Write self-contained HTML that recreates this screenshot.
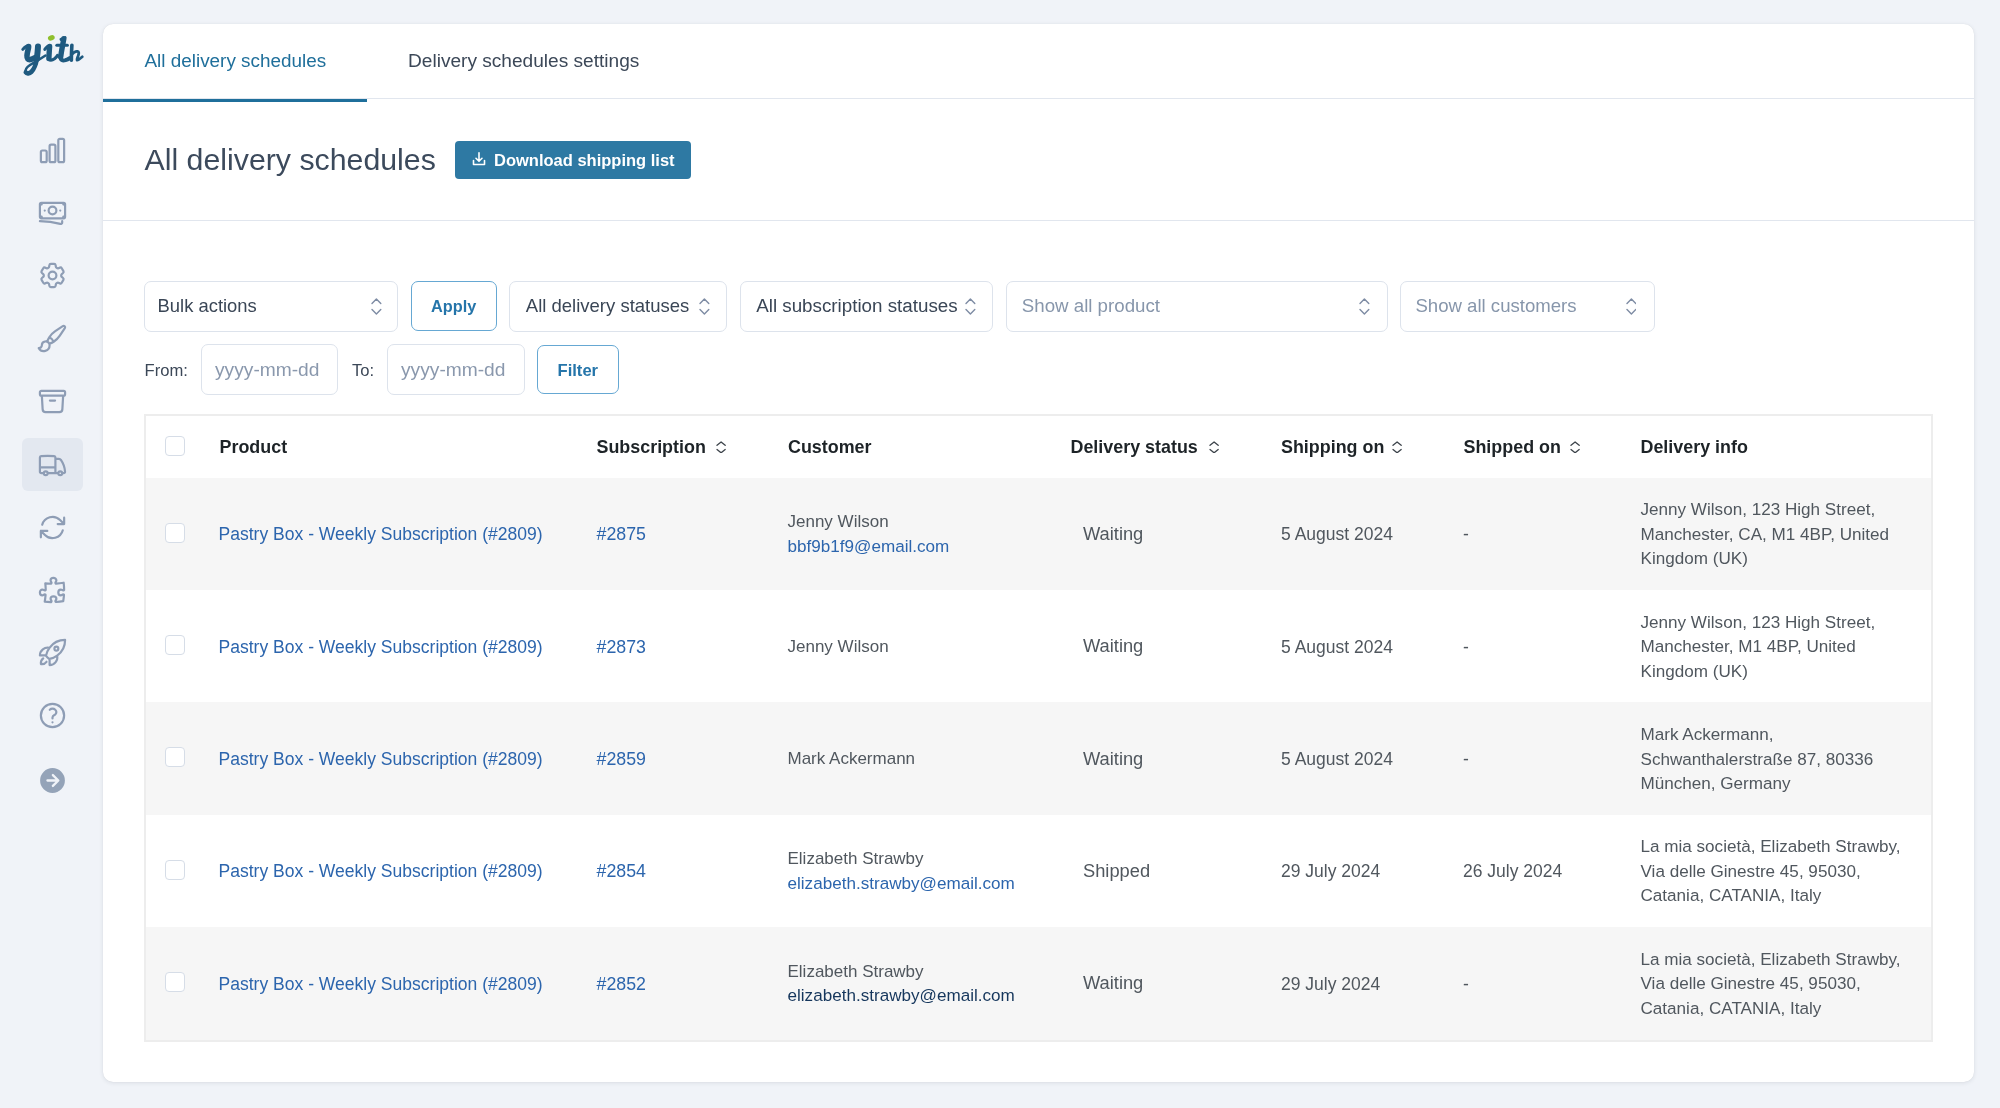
<!DOCTYPE html>
<html><head><meta charset="utf-8"><title>All delivery schedules</title>
<style>
html,body{margin:0;padding:0}
body{width:2000px;height:1108px;overflow:hidden;position:relative;background:#f0f3f8;font-family:"Liberation Sans",sans-serif}
a{text-decoration:none} h1{margin:0} th{padding:0;text-align:left}
#wrap{position:absolute;left:0;top:0;width:2000px;height:1108px;will-change:transform}
</style></head><body>
<div id="wrap">
<svg style="position:absolute;left:0;top:0" width="100" height="90" viewBox="0 0 100 90" fill="none" stroke="#1f5a80" stroke-linecap="round" stroke-linejoin="round"><path stroke-width="3" d="M22.8 49.4 C24.5 47.4 26.5 45.7 28.8 45.5"/><path stroke-width="5.6" d="M28.6 46.6 C28.5 49 27.2 52.5 27 55.5 C26.8 58.8 28 60 30.5 59.6 C32 59.3 33.5 58.5 35 57.6"/><path stroke-width="6" d="M38 46.4 C37.8 51 37.3 55 36.8 59"/><path stroke-width="4.6" d="M36.8 59 C36 64 34.5 68.5 31.5 71.8 C29.5 73.6 26.8 74 25.8 72.4"/><path stroke-width="2.6" d="M25.8 72.4 C24.8 70 27 67 30 65 C33 63 38 60.5 45.5 55.5"/><path stroke-width="3" d="M44.8 49.4 C46.3 47.2 48 45.7 50 45.5"/><path stroke-width="5.4" d="M49.6 46.5 C49.3 51 49 55 48.9 58.6"/><path stroke-width="3.2" d="M48.9 58.6 C49.5 60.8 52 60.6 54.5 58.8 C56 57.6 57 56.5 57.5 55.5"/><path stroke-width="3" d="M61 39.4 L65 37.5"/><path stroke-width="5.4" d="M63.8 38.8 C62.8 44.5 61.2 52 60.7 57"/><path stroke-width="4" d="M60.7 57 C60.5 60.2 62.5 60.9 65.5 60.1 C67.5 59.5 69 58.6 70 58"/><path stroke-width="3" d="M56.8 45.2 L67.4 45.2"/><path stroke-width="3.6" d="M71.9 45.2 C71.6 50.5 71.3 55 71.4 60.2"/><path stroke-width="2.8" d="M71.8 54.5 C73.5 52.3 76 51.2 77.5 51.4 C79 51.7 79 53.5 78.3 55.5 C77.6 57.5 76.6 59.3 77 60 C77.5 60.6 80 58.8 82.3 56.8"/><ellipse cx="51.3" cy="37.8" rx="3.5" ry="2.6" transform="rotate(-22 51.3 37.8)" fill="#8fbf2e" stroke="none"/></svg>
<div style="position:absolute;left:22px;top:438px;width:61px;height:53px;border-radius:6px;background:#e3e8f0"></div>
<svg style="position:absolute;left:36.70px;top:134.55px" width="31" height="31" viewBox="0 0 24 24" fill="none" stroke="#8e9db5" stroke-width="1.7" stroke-linecap="round" stroke-linejoin="round"><path d="M3 13.125C3 12.504 3.504 12 4.125 12h2.25c.621 0 1.125.504 1.125 1.125v6.75C7.5 20.496 6.996 21 6.375 21h-2.25A1.125 1.125 0 0 1 3 19.875v-6.75ZM9.75 8.625c0-.621.504-1.125 1.125-1.125h2.25c.621 0 1.125.504 1.125 1.125v11.25c0 .621-.504 1.125-1.125 1.125h-2.25a1.125 1.125 0 0 1-1.125-1.125V8.625ZM16.5 4.125c0-.621.504-1.125 1.125-1.125h2.25C20.496 3 21 3.504 21 4.125v15.75c0 .621-.504 1.125-1.125 1.125h-2.25a1.125 1.125 0 0 1-1.125-1.125V4.125Z"/></svg>
<svg style="position:absolute;left:36.70px;top:197.41px" width="31" height="31" viewBox="0 0 24 24" fill="none" stroke="#8e9db5" stroke-width="1.7" stroke-linecap="round" stroke-linejoin="round"><path d="M2.25 18.75a60.07 60.07 0 0 1 15.797 2.101c.727.198 1.453-.342 1.453-1.096V18.75M3.75 4.5v.75A.75.75 0 0 1 3 6h-.75m0 0v-.375c0-.621.504-1.125 1.125-1.125H20.25M2.25 6v9m18-10.5v.75c0 .414.336.75.75.75h.75m-1.5-1.5h.375c.621 0 1.125.504 1.125 1.125v9.75c0 .621-.504 1.125-1.125 1.125h-.375m1.5-1.5H21a.75.75 0 0 0-.75.75v.75m0 0H3.75m0 0h-.375a1.125 1.125 0 0 1-1.125-1.125V15m1.5 1.5v-.75A.75.75 0 0 0 3 15h-.75M15 10.5a3 3 0 1 1-6 0 3 3 0 0 1 6 0Zm3 0h.008v.008H18V10.5Zm-12 0h.008v.008H6V10.5Z"/></svg>
<svg style="position:absolute;left:36.70px;top:260.27px" width="31" height="31" viewBox="0 0 24 24" fill="none" stroke="#8e9db5" stroke-width="1.7" stroke-linecap="round" stroke-linejoin="round"><path d="M9.594 3.94c.09-.542.56-.94 1.11-.94h2.593c.55 0 1.02.398 1.11.94l.213 1.281c.063.374.313.686.645.87.074.04.147.083.22.127.325.196.72.257 1.075.124l1.217-.456a1.125 1.125 0 0 1 1.37.49l1.296 2.247a1.125 1.125 0 0 1-.26 1.431l-1.003.827c-.293.241-.438.613-.43.992a7.723 7.723 0 0 1 0 .255c-.008.378.137.75.43.991l1.004.827c.424.35.534.955.26 1.43l-1.298 2.247a1.125 1.125 0 0 1-1.369.491l-1.217-.456c-.355-.133-.75-.072-1.076.124a6.47 6.47 0 0 1-.22.128c-.331.183-.581.495-.644.869l-.213 1.281c-.09.543-.56.94-1.11.94h-2.594c-.55 0-1.019-.398-1.11-.94l-.213-1.281c-.062-.374-.312-.686-.644-.87a6.52 6.52 0 0 1-.22-.127c-.325-.196-.72-.257-1.076-.124l-1.217.456a1.125 1.125 0 0 1-1.369-.49l-1.297-2.247a1.125 1.125 0 0 1 .26-1.431l1.004-.827c.292-.24.437-.613.43-.991a6.932 6.932 0 0 1 0-.255c.007-.38-.138-.751-.43-.992l-1.004-.827a1.125 1.125 0 0 1-.26-1.43l1.297-2.247a1.125 1.125 0 0 1 1.37-.491l1.216.456c.356.133.751.072 1.076-.124.072-.044.146-.086.22-.128.332-.183.582-.495.644-.869l.214-1.28Z"/><path d="M15 12a3 3 0 1 1-6 0 3 3 0 0 1 6 0Z"/></svg>
<svg style="position:absolute;left:36.70px;top:323.13px" width="31" height="31" viewBox="0 0 24 24" fill="none" stroke="#8e9db5" stroke-width="1.7" stroke-linecap="round" stroke-linejoin="round"><path d="M9.53 16.122a3 3 0 0 0-5.78 1.128 2.25 2.25 0 0 1-2.4 2.245 4.5 4.5 0 0 0 8.4-2.245c0-.399-.078-.78-.22-1.128Zm0 0a15.998 15.998 0 0 0 3.388-1.62m-5.043-.025a15.994 15.994 0 0 1 1.622-3.395m3.42 3.42a15.995 15.995 0 0 0 4.764-4.648l3.876-5.814a1.151 1.151 0 0 0-1.597-1.597L14.146 6.32a15.996 15.996 0 0 0-4.649 4.763m3.42 3.42a6.776 6.776 0 0 0-3.42-3.42"/></svg>
<svg style="position:absolute;left:36.70px;top:385.99px" width="31" height="31" viewBox="0 0 24 24" fill="none" stroke="#8e9db5" stroke-width="1.7" stroke-linecap="round" stroke-linejoin="round"><path d="m20.25 7.5-.625 10.632a2.25 2.25 0 0 1-2.247 2.118H6.622a2.25 2.25 0 0 1-2.247-2.118L3.75 7.5M10 11.25h4M3.375 7.5h17.25c.621 0 1.125-.504 1.125-1.125v-1.5c0-.621-.504-1.125-1.125-1.125H3.375c-.621 0-1.125.504-1.125 1.125v1.5c0 .621.504 1.125 1.125 1.125Z"/></svg>
<svg style="position:absolute;left:36.70px;top:448.85px" width="31" height="31" viewBox="0 0 24 24" fill="none" stroke="#8e9db5" stroke-width="1.7" stroke-linecap="round" stroke-linejoin="round"><path d="M8.25 18.75a1.5 1.5 0 0 1-3 0m3 0a1.5 1.5 0 0 0-3 0m3 0h6m-9 0H3.375a1.125 1.125 0 0 1-1.125-1.125V14.25m17.25 4.5a1.5 1.5 0 0 1-3 0m3 0a1.5 1.5 0 0 0-3 0m3 0h1.125c.621 0 1.129-.504 1.09-1.124a17.902 17.902 0 0 0-3.213-9.193 2.056 2.056 0 0 0-1.58-.86H14.25M16.5 18.75h-2.25m0-11.177v-.958c0-.568-.422-1.048-.987-1.106a48.554 48.554 0 0 0-10.026 0 1.106 1.106 0 0 0-.987 1.106v7.635m12-6.677v6.677m0 4.5v-4.5m0 0h-12"/></svg>
<svg style="position:absolute;left:36.70px;top:511.71px" width="31" height="31" viewBox="0 0 24 24" fill="none" stroke="#8e9db5" stroke-width="1.7" stroke-linecap="round" stroke-linejoin="round"><path d="M16.023 9.348h4.992v-.001M2.985 19.644v-4.992m0 0h4.992m-4.993 0 3.181 3.183a8.25 8.25 0 0 0 13.803-3.7M4.031 9.865a8.25 8.25 0 0 1 13.803-3.7l3.181 3.182m0-4.991v4.99"/></svg>
<svg style="position:absolute;left:36.70px;top:574.57px" width="31" height="31" viewBox="0 0 24 24" fill="none" stroke="#8e9db5" stroke-width="1.7" stroke-linecap="round" stroke-linejoin="round"><path d="M14.25 6.087c0-.355.186-.676.401-.959.221-.29.349-.634.349-1.003 0-1.036-1.007-1.875-2.25-1.875s-2.25.84-2.25 1.875c0 .369.128.713.349 1.003.215.283.401.604.401.959v0a.64.64 0 0 1-.657.643 48.39 48.39 0 0 1-4.163-.3c.186 1.613.293 3.25.315 4.907a.656.656 0 0 1-.658.663v0c-.355 0-.676-.186-.959-.401a1.647 1.647 0 0 0-1.003-.349c-1.036 0-1.875 1.007-1.875 2.25s.84 2.25 1.875 2.25c.369 0 .713-.128 1.003-.349.283-.215.604-.401.959-.401v0c.31 0 .555.26.532.57a48.039 48.039 0 0 1-.642 5.056c1.518.19 3.058.309 4.616.354a.64.64 0 0 0 .657-.643v0c0-.355-.186-.676-.401-.959a1.647 1.647 0 0 1-.349-1.003c0-1.035 1.008-1.875 2.25-1.875 1.243 0 2.25.84 2.25 1.875 0 .369-.128.713-.349 1.003-.215.283-.4.604-.4.959v0c0 .333.277.599.61.58a48.1 48.1 0 0 0 5.427-.63 48.05 48.05 0 0 0 .582-4.717.532.532 0 0 0-.533-.57v0c-.355 0-.676.186-.959.401-.29.221-.634.349-1.003.349-1.035 0-1.875-1.007-1.875-2.25s.84-2.25 1.875-2.25c.37 0 .713.128 1.003.349.283.215.604.401.96.401v0a.656.656 0 0 0 .658-.663 48.422 48.422 0 0 0-.37-5.36c-1.886.342-3.81.574-5.766.689a.578.578 0 0 1-.61-.58v0Z"/></svg>
<svg style="position:absolute;left:36.70px;top:637.43px" width="31" height="31" viewBox="0 0 24 24" fill="none" stroke="#8e9db5" stroke-width="1.7" stroke-linecap="round" stroke-linejoin="round"><path d="M15.59 14.37a6 6 0 0 1-5.84 7.38v-4.8m5.84-2.58a14.98 14.98 0 0 0 6.16-12.12A14.98 14.98 0 0 0 9.631 8.41m5.96 5.96a14.926 14.926 0 0 1-5.841 2.58m-.119-8.54a6 6 0 0 0-7.381 5.84h4.8m2.581-5.84a14.927 14.927 0 0 0-2.58 5.84m2.699 2.7c-.103.021-.207.041-.311.06a15.09 15.09 0 0 1-2.448-2.448 14.9 14.9 0 0 1 .06-.312m-2.24 2.39a4.493 4.493 0 0 0-1.757 4.306 4.493 4.493 0 0 0 4.306-1.758M16.5 9a1.5 1.5 0 1 1-3 0 1.5 1.5 0 0 1 3 0Z"/></svg>
<svg style="position:absolute;left:36.70px;top:700.29px" width="31" height="31" viewBox="0 0 24 24" fill="none" stroke="#8e9db5" stroke-width="1.7" stroke-linecap="round" stroke-linejoin="round"><path d="M9.879 7.519c1.171-1.025 3.071-1.025 4.242 0 1.172 1.025 1.172 2.687 0 3.712-.203.179-.43.326-.67.442-.745.361-1.45.999-1.45 1.827v.75M21 12a9 9 0 1 1-18 0 9 9 0 0 1 18 0Zm-9 5.25h.008v.008H12v-.008Z"/></svg>
<svg style="position:absolute;left:36.5px;top:764.5px" width="31" height="31" viewBox="0 0 20 20"><path fill="#94a3b8" fill-rule="evenodd" d="M10 18a8 8 0 1 0 0-16 8 8 0 0 0 0 16Zm4.28-7.47a.75.75 0 0 0 0-1.06l-3.5-3.5a.75.75 0 1 0-1.06 1.06l2.22 2.22H6.75a.75.75 0 0 0 0 1.5h5.19l-2.22 2.22a.75.75 0 1 0 1.06 1.06l3.5-3.5Z"/></svg>
<div style="position:absolute;left:103px;top:24px;width:1871px;height:1058px;background:#fff;border-radius:10px;box-shadow:0 1px 4px rgba(30,40,60,0.10),0 0 1px rgba(30,40,60,0.12)"></div>
<div style="position:absolute;left:103px;top:98px;width:1871px;height:1px;background:#e1e6ee"></div>
<div style="position:absolute;left:103px;top:98.5px;width:264px;height:3.5px;background:#1f6f9b"></div>
<a style="position:absolute;left:144.5px;top:52px;font-size:18.9px;line-height:18.9px;font-weight:400;color:#1f6f9b;white-space:nowrap;">All delivery schedules</a>
<a style="position:absolute;left:408px;top:51px;font-size:19.1px;line-height:19.1px;font-weight:400;color:#3c4858;white-space:nowrap;">Delivery schedules settings</a>
<h1 style="position:absolute;left:144.5px;top:145px;font-size:30.3px;line-height:30.3px;font-weight:400;color:#3c4a5c;white-space:nowrap;">All delivery schedules</h1>
<div style="position:absolute;left:455px;top:141px;width:236px;height:38px;background:#2e79a3;border-radius:4px"></div>
<svg style="position:absolute;left:471px;top:151px" width="16" height="16" viewBox="0 0 16 16" fill="none" stroke="#fff" stroke-width="1.6" stroke-linecap="round" stroke-linejoin="round"><path d="M2.5 9.5v4h11v-4M8 1.8v8.2M5 7.3l3 3 3-3"/></svg>
<div style="position:absolute;left:494px;top:152px;font-size:16.5px;line-height:16.5px;font-weight:700;color:#fff;white-space:nowrap;">Download shipping list</div>
<div style="position:absolute;left:103px;top:219.6px;width:1871px;height:1px;background:#e1e6ee"></div>
<div style="position:absolute;left:144px;top:280.5px;width:254px;height:51px;box-sizing:border-box;border:1px solid #dde3ec;border-radius:7px;background:#fff"></div>
<div style="position:absolute;left:157.6px;top:297px;font-size:18.4px;line-height:18.4px;font-weight:400;color:#3a4656;white-space:nowrap;">Bulk actions</div>
<svg style="position:absolute;left:370.80px;top:297.50px" width="10.8" height="17" viewBox="-1 -1 10.8 17" fill="none" stroke="#7e8ca4" stroke-width="1.4" stroke-linecap="round" stroke-linejoin="round"><path d="M0 4.50 L4.40 0 L8.8 4.50 M0 10.50 L4.40 15 L8.8 10.50"/></svg>
<div style="position:absolute;left:509px;top:280.5px;width:218px;height:51px;box-sizing:border-box;border:1px solid #dde3ec;border-radius:7px;background:#fff"></div>
<div style="position:absolute;left:525.8px;top:297px;font-size:18.5px;line-height:18.5px;font-weight:400;color:#3a4656;white-space:nowrap;">All delivery statuses</div>
<svg style="position:absolute;left:698.90px;top:297.50px" width="10.8" height="17" viewBox="-1 -1 10.8 17" fill="none" stroke="#7e8ca4" stroke-width="1.4" stroke-linecap="round" stroke-linejoin="round"><path d="M0 4.50 L4.40 0 L8.8 4.50 M0 10.50 L4.40 15 L8.8 10.50"/></svg>
<div style="position:absolute;left:740px;top:280.5px;width:253px;height:51px;box-sizing:border-box;border:1px solid #dde3ec;border-radius:7px;background:#fff"></div>
<div style="position:absolute;left:756.2px;top:297px;font-size:18.8px;line-height:18.8px;font-weight:400;color:#3a4656;white-space:nowrap;">All subscription statuses</div>
<svg style="position:absolute;left:965.30px;top:297.50px" width="10.8" height="17" viewBox="-1 -1 10.8 17" fill="none" stroke="#7e8ca4" stroke-width="1.4" stroke-linecap="round" stroke-linejoin="round"><path d="M0 4.50 L4.40 0 L8.8 4.50 M0 10.50 L4.40 15 L8.8 10.50"/></svg>
<div style="position:absolute;left:1006px;top:280.5px;width:382px;height:51px;box-sizing:border-box;border:1px solid #dde3ec;border-radius:7px;background:#fff"></div>
<div style="position:absolute;left:1021.8px;top:297px;font-size:18.7px;line-height:18.7px;font-weight:400;color:#8796ab;white-space:nowrap;">Show all product</div>
<svg style="position:absolute;left:1358.90px;top:297.50px" width="10.8" height="17" viewBox="-1 -1 10.8 17" fill="none" stroke="#7e8ca4" stroke-width="1.4" stroke-linecap="round" stroke-linejoin="round"><path d="M0 4.50 L4.40 0 L8.8 4.50 M0 10.50 L4.40 15 L8.8 10.50"/></svg>
<div style="position:absolute;left:1400px;top:280.5px;width:255px;height:51px;box-sizing:border-box;border:1px solid #dde3ec;border-radius:7px;background:#fff"></div>
<div style="position:absolute;left:1415.4px;top:297px;font-size:18.6px;line-height:18.6px;font-weight:400;color:#8796ab;white-space:nowrap;">Show all customers</div>
<svg style="position:absolute;left:1625.50px;top:297.50px" width="10.8" height="17" viewBox="-1 -1 10.8 17" fill="none" stroke="#7e8ca4" stroke-width="1.4" stroke-linecap="round" stroke-linejoin="round"><path d="M0 4.50 L4.40 0 L8.8 4.50 M0 10.50 L4.40 15 L8.8 10.50"/></svg>
<div style="position:absolute;left:411px;top:281px;width:86px;height:50px;box-sizing:border-box;border:1px solid #66a8d3;border-radius:7px;background:#fff"></div>
<div style="position:absolute;left:431px;top:298px;font-size:16.3px;line-height:16.3px;font-weight:700;color:#2575aa;white-space:nowrap;">Apply</div>
<div style="position:absolute;left:144.5px;top:363px;font-size:16.6px;line-height:16.6px;font-weight:400;color:#3c4858;white-space:nowrap;">From:</div>
<div style="position:absolute;left:201px;top:344px;width:137px;height:51px;box-sizing:border-box;border:1px solid #dde3ec;border-radius:7px;background:#fff"></div>
<div style="position:absolute;left:215px;top:360px;font-size:19.2px;line-height:19.2px;font-weight:400;color:#8a98ad;white-space:nowrap;">yyyy-mm-dd</div>
<div style="position:absolute;left:352px;top:363px;font-size:16.6px;line-height:16.6px;font-weight:400;color:#3c4858;white-space:nowrap;">To:</div>
<div style="position:absolute;left:387px;top:344px;width:138px;height:51px;box-sizing:border-box;border:1px solid #dde3ec;border-radius:7px;background:#fff"></div>
<div style="position:absolute;left:401px;top:360px;font-size:19.2px;line-height:19.2px;font-weight:400;color:#8a98ad;white-space:nowrap;">yyyy-mm-dd</div>
<div style="position:absolute;left:537px;top:345px;width:82px;height:49px;box-sizing:border-box;border:1px solid #66a8d3;border-radius:7px;background:#fff"></div>
<div style="position:absolute;left:557.5px;top:363px;font-size:16.6px;line-height:16.6px;font-weight:700;color:#2575aa;white-space:nowrap;">Filter</div>
<div style="position:absolute;left:144px;top:414px;width:1789px;height:627.5px;box-sizing:border-box;border:2px solid #ededed;background:#fff"></div>
<div style="position:absolute;left:165.2px;top:436px;width:20px;height:20px;box-sizing:border-box;border:1.3px solid #d6dde7;border-radius:4px;background:#fff"></div>
<div style="position:absolute;left:219.5px;top:439px;font-size:17.9px;line-height:17.9px;font-weight:700;color:#1d2327;white-space:nowrap;">Product</div>
<div style="position:absolute;left:596.5px;top:439px;font-size:17.9px;line-height:17.9px;font-weight:700;color:#1d2327;white-space:nowrap;">Subscription</div>
<div style="position:absolute;left:788px;top:439px;font-size:17.9px;line-height:17.9px;font-weight:700;color:#1d2327;white-space:nowrap;">Customer</div>
<div style="position:absolute;left:1070.5px;top:439px;font-size:17.9px;line-height:17.9px;font-weight:700;color:#1d2327;white-space:nowrap;">Delivery status</div>
<div style="position:absolute;left:1281px;top:439px;font-size:17.9px;line-height:17.9px;font-weight:700;color:#1d2327;white-space:nowrap;">Shipping on</div>
<div style="position:absolute;left:1463.5px;top:439px;font-size:17.9px;line-height:17.9px;font-weight:700;color:#1d2327;white-space:nowrap;">Shipped on</div>
<div style="position:absolute;left:1640.5px;top:439px;font-size:17.9px;line-height:17.9px;font-weight:700;color:#1d2327;white-space:nowrap;">Delivery info</div>
<svg style="position:absolute;left:715.90px;top:440.60px" width="10.2" height="12.8" viewBox="-1 -1 10.2 12.8" fill="none" stroke="#3c434a" stroke-width="1.3" stroke-linecap="round" stroke-linejoin="round"><path d="M0 3.24 L4.10 0 L8.2 3.24 M0 7.56 L4.10 10.8 L8.2 7.56"/></svg>
<svg style="position:absolute;left:1208.60px;top:440.60px" width="10.2" height="12.8" viewBox="-1 -1 10.2 12.8" fill="none" stroke="#3c434a" stroke-width="1.3" stroke-linecap="round" stroke-linejoin="round"><path d="M0 3.24 L4.10 0 L8.2 3.24 M0 7.56 L4.10 10.8 L8.2 7.56"/></svg>
<svg style="position:absolute;left:1392.10px;top:440.60px" width="10.2" height="12.8" viewBox="-1 -1 10.2 12.8" fill="none" stroke="#3c434a" stroke-width="1.3" stroke-linecap="round" stroke-linejoin="round"><path d="M0 3.24 L4.10 0 L8.2 3.24 M0 7.56 L4.10 10.8 L8.2 7.56"/></svg>
<svg style="position:absolute;left:1569.60px;top:440.60px" width="10.2" height="12.8" viewBox="-1 -1 10.2 12.8" fill="none" stroke="#3c434a" stroke-width="1.3" stroke-linecap="round" stroke-linejoin="round"><path d="M0 3.24 L4.10 0 L8.2 3.24 M0 7.56 L4.10 10.8 L8.2 7.56"/></svg>
<div style="position:absolute;left:146px;top:477.50px;width:1785px;height:112.90px;background:#f6f6f6"></div>
<div style="position:absolute;left:165.2px;top:522.6px;width:20px;height:20px;box-sizing:border-box;border:1.3px solid #d6dde7;border-radius:4px;background:#fff"></div>
<a style="position:absolute;left:218.5px;top:526px;font-size:17.55px;line-height:17.55px;font-weight:400;color:#2c65ad;white-space:nowrap;">Pastry Box - Weekly Subscription (#2809)</a>
<a style="position:absolute;left:596.5px;top:526px;font-size:17.8px;line-height:17.8px;font-weight:400;color:#2c65ad;white-space:nowrap;">#2875</a>
<div style="position:absolute;left:787.5px;top:513px;font-size:17px;line-height:17px;font-weight:400;color:#50575e;white-space:nowrap;">Jenny Wilson</div>
<a style="position:absolute;left:787.5px;top:538px;font-size:17.1px;line-height:17.1px;font-weight:400;color:#2c65ad;white-space:nowrap;">bbf9b1f9@email.com</a>
<div style="position:absolute;left:1083px;top:525px;font-size:18.3px;line-height:18.3px;font-weight:400;color:#50575e;white-space:nowrap;">Waiting</div>
<div style="position:absolute;left:1281px;top:526px;font-size:17.5px;line-height:17.5px;font-weight:400;color:#50575e;white-space:nowrap;">5 August 2024</div>
<div style="position:absolute;left:1463px;top:526px;font-size:17.5px;line-height:17.5px;font-weight:400;color:#50575e;white-space:nowrap;">-</div>
<div style="position:absolute;left:1640.5px;top:501px;font-size:17.1px;line-height:17.1px;font-weight:400;color:#50575e;white-space:nowrap;">Jenny Wilson, 123 High Street,</div>
<div style="position:absolute;left:1640.5px;top:526px;font-size:17.1px;line-height:17.1px;font-weight:400;color:#50575e;white-space:nowrap;">Manchester, CA, M1 4BP, United</div>
<div style="position:absolute;left:1640.5px;top:550px;font-size:17.1px;line-height:17.1px;font-weight:400;color:#50575e;white-space:nowrap;">Kingdom (UK)</div>
<div style="position:absolute;left:146px;top:589.90px;width:1785px;height:112.90px;background:#ffffff"></div>
<div style="position:absolute;left:165.2px;top:635.0px;width:20px;height:20px;box-sizing:border-box;border:1.3px solid #d6dde7;border-radius:4px;background:#fff"></div>
<a style="position:absolute;left:218.5px;top:639px;font-size:17.55px;line-height:17.55px;font-weight:400;color:#2c65ad;white-space:nowrap;">Pastry Box - Weekly Subscription (#2809)</a>
<a style="position:absolute;left:596.5px;top:639px;font-size:17.8px;line-height:17.8px;font-weight:400;color:#2c65ad;white-space:nowrap;">#2873</a>
<div style="position:absolute;left:787.5px;top:638px;font-size:17px;line-height:17px;font-weight:400;color:#50575e;white-space:nowrap;">Jenny Wilson</div>
<div style="position:absolute;left:1083px;top:637px;font-size:18.3px;line-height:18.3px;font-weight:400;color:#50575e;white-space:nowrap;">Waiting</div>
<div style="position:absolute;left:1281px;top:639px;font-size:17.5px;line-height:17.5px;font-weight:400;color:#50575e;white-space:nowrap;">5 August 2024</div>
<div style="position:absolute;left:1463px;top:639px;font-size:17.5px;line-height:17.5px;font-weight:400;color:#50575e;white-space:nowrap;">-</div>
<div style="position:absolute;left:1640.5px;top:614px;font-size:17.1px;line-height:17.1px;font-weight:400;color:#50575e;white-space:nowrap;">Jenny Wilson, 123 High Street,</div>
<div style="position:absolute;left:1640.5px;top:638px;font-size:17.1px;line-height:17.1px;font-weight:400;color:#50575e;white-space:nowrap;">Manchester, M1 4BP, United</div>
<div style="position:absolute;left:1640.5px;top:663px;font-size:17.1px;line-height:17.1px;font-weight:400;color:#50575e;white-space:nowrap;">Kingdom (UK)</div>
<div style="position:absolute;left:146px;top:702.30px;width:1785px;height:112.90px;background:#f6f6f6"></div>
<div style="position:absolute;left:165.2px;top:747.4px;width:20px;height:20px;box-sizing:border-box;border:1.3px solid #d6dde7;border-radius:4px;background:#fff"></div>
<a style="position:absolute;left:218.5px;top:751px;font-size:17.55px;line-height:17.55px;font-weight:400;color:#2c65ad;white-space:nowrap;">Pastry Box - Weekly Subscription (#2809)</a>
<a style="position:absolute;left:596.5px;top:751px;font-size:17.8px;line-height:17.8px;font-weight:400;color:#2c65ad;white-space:nowrap;">#2859</a>
<div style="position:absolute;left:787.5px;top:750px;font-size:17px;line-height:17px;font-weight:400;color:#50575e;white-space:nowrap;">Mark Ackermann</div>
<div style="position:absolute;left:1083px;top:750px;font-size:18.3px;line-height:18.3px;font-weight:400;color:#50575e;white-space:nowrap;">Waiting</div>
<div style="position:absolute;left:1281px;top:751px;font-size:17.5px;line-height:17.5px;font-weight:400;color:#50575e;white-space:nowrap;">5 August 2024</div>
<div style="position:absolute;left:1463px;top:751px;font-size:17.5px;line-height:17.5px;font-weight:400;color:#50575e;white-space:nowrap;">-</div>
<div style="position:absolute;left:1640.5px;top:726px;font-size:17.1px;line-height:17.1px;font-weight:400;color:#50575e;white-space:nowrap;">Mark Ackermann,</div>
<div style="position:absolute;left:1640.5px;top:751px;font-size:17.1px;line-height:17.1px;font-weight:400;color:#50575e;white-space:nowrap;">Schwanthalerstraße 87, 80336</div>
<div style="position:absolute;left:1640.5px;top:775px;font-size:17.1px;line-height:17.1px;font-weight:400;color:#50575e;white-space:nowrap;">München, Germany</div>
<div style="position:absolute;left:146px;top:814.70px;width:1785px;height:112.90px;background:#ffffff"></div>
<div style="position:absolute;left:165.2px;top:859.8px;width:20px;height:20px;box-sizing:border-box;border:1.3px solid #d6dde7;border-radius:4px;background:#fff"></div>
<a style="position:absolute;left:218.5px;top:863px;font-size:17.55px;line-height:17.55px;font-weight:400;color:#2c65ad;white-space:nowrap;">Pastry Box - Weekly Subscription (#2809)</a>
<a style="position:absolute;left:596.5px;top:863px;font-size:17.8px;line-height:17.8px;font-weight:400;color:#2c65ad;white-space:nowrap;">#2854</a>
<div style="position:absolute;left:787.5px;top:850px;font-size:17px;line-height:17px;font-weight:400;color:#50575e;white-space:nowrap;">Elizabeth Strawby</div>
<a style="position:absolute;left:787.5px;top:875px;font-size:17.1px;line-height:17.1px;font-weight:400;color:#2c65ad;white-space:nowrap;">elizabeth.strawby@email.com</a>
<div style="position:absolute;left:1083px;top:862px;font-size:18.3px;line-height:18.3px;font-weight:400;color:#50575e;white-space:nowrap;">Shipped</div>
<div style="position:absolute;left:1281px;top:863px;font-size:17.5px;line-height:17.5px;font-weight:400;color:#50575e;white-space:nowrap;">29 July 2024</div>
<div style="position:absolute;left:1463px;top:863px;font-size:17.5px;line-height:17.5px;font-weight:400;color:#50575e;white-space:nowrap;">26 July 2024</div>
<div style="position:absolute;left:1640.5px;top:838px;font-size:17.1px;line-height:17.1px;font-weight:400;color:#50575e;white-space:nowrap;">La mia società, Elizabeth Strawby,</div>
<div style="position:absolute;left:1640.5px;top:863px;font-size:17.1px;line-height:17.1px;font-weight:400;color:#50575e;white-space:nowrap;">Via delle Ginestre 45, 95030,</div>
<div style="position:absolute;left:1640.5px;top:887px;font-size:17.1px;line-height:17.1px;font-weight:400;color:#50575e;white-space:nowrap;">Catania, CATANIA, Italy</div>
<div style="position:absolute;left:146px;top:927.10px;width:1785px;height:112.90px;background:#f6f6f6"></div>
<div style="position:absolute;left:165.2px;top:972.2px;width:20px;height:20px;box-sizing:border-box;border:1.3px solid #d6dde7;border-radius:4px;background:#fff"></div>
<a style="position:absolute;left:218.5px;top:976px;font-size:17.55px;line-height:17.55px;font-weight:400;color:#2c65ad;white-space:nowrap;">Pastry Box - Weekly Subscription (#2809)</a>
<a style="position:absolute;left:596.5px;top:976px;font-size:17.8px;line-height:17.8px;font-weight:400;color:#2c65ad;white-space:nowrap;">#2852</a>
<div style="position:absolute;left:787.5px;top:963px;font-size:17px;line-height:17px;font-weight:400;color:#50575e;white-space:nowrap;">Elizabeth Strawby</div>
<a style="position:absolute;left:787.5px;top:987px;font-size:17.1px;line-height:17.1px;font-weight:400;color:#15365c;white-space:nowrap;">elizabeth.strawby@email.com</a>
<div style="position:absolute;left:1083px;top:974px;font-size:18.3px;line-height:18.3px;font-weight:400;color:#50575e;white-space:nowrap;">Waiting</div>
<div style="position:absolute;left:1281px;top:976px;font-size:17.5px;line-height:17.5px;font-weight:400;color:#50575e;white-space:nowrap;">29 July 2024</div>
<div style="position:absolute;left:1463px;top:976px;font-size:17.5px;line-height:17.5px;font-weight:400;color:#50575e;white-space:nowrap;">-</div>
<div style="position:absolute;left:1640.5px;top:951px;font-size:17.1px;line-height:17.1px;font-weight:400;color:#50575e;white-space:nowrap;">La mia società, Elizabeth Strawby,</div>
<div style="position:absolute;left:1640.5px;top:975px;font-size:17.1px;line-height:17.1px;font-weight:400;color:#50575e;white-space:nowrap;">Via delle Ginestre 45, 95030,</div>
<div style="position:absolute;left:1640.5px;top:1000px;font-size:17.1px;line-height:17.1px;font-weight:400;color:#50575e;white-space:nowrap;">Catania, CATANIA, Italy</div>
</div>
</body></html>
